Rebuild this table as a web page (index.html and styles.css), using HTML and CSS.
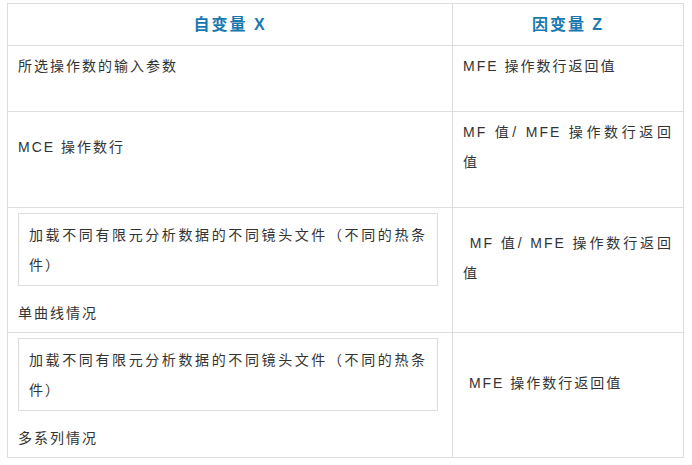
FILE: index.html
```html
<!DOCTYPE html>
<html lang="zh-CN">
<head>
<meta charset="utf-8">
<title>自变量与因变量</title>
<link rel="stylesheet" href="styles.css">
</head>
<body>
<table class="vars">
  <colgroup>
    <col class="col-x">
    <col class="col-z">
  </colgroup>
  <thead>
    <tr>
      <th>自变量 X</th>
      <th>因变量 Z</th>
    </tr>
  </thead>
  <tbody>
    <tr>
      <td><p class="para">所选操作数的输入参数</p></td>
      <td><p class="para">MFE 操作数行返回值</p></td>
    </tr>
    <tr>
      <td><p class="para">MCE 操作数行</p></td>
      <td><p class="para">MF 值/ MFE 操作数行返回值</p></td>
    </tr>
    <tr>
      <td>
        <div class="box">加载不同有限元分析数据的不同镜头文件（不同的热条件）</div>
        <p class="plain">单曲线情况</p>
      </td>
      <td><p class="para">&nbsp;MF 值/ MFE 操作数行返回值</p></td>
    </tr>
    <tr>
      <td>
        <div class="box">加载不同有限元分析数据的不同镜头文件（不同的热条件）</div>
        <p class="plain">多系列情况</p>
      </td>
      <td><p class="para">&nbsp;MFE 操作数行返回值</p></td>
    </tr>
  </tbody>
</table>
</body>
</html>
```
FILE: styles.css
```css
html, body {
  margin: 0;
  padding: 0;
  background: #ffffff;
}

body {
  font-family: "Liberation Sans", "Noto Sans CJK SC", sans-serif;
  color: #333333;
}

.vars {
  border-collapse: collapse;
  table-layout: fixed;
  width: 677px;
  margin: 3px 0 0 7px;
}

.col-x { width: 445px; }
.col-z { width: 231px; }

.vars th,
.vars td {
  border: 1px solid #dddddd;
}

.vars th {
  padding: 10px 10px;
  font-size: 16px;
  line-height: 21px;
  font-weight: bold;
  letter-spacing: 2px;
  color: #1878b0;
  text-align: center;
}

.vars td {
  padding: 5px 10px 4px 10px;
  font-size: 14px;
  line-height: 30px;
  letter-spacing: 2px;
  vertical-align: middle;
  text-align: justify;
}

.para {
  margin: 0 0 26px 0;
}

.plain {
  margin: 0;
}

.box {
  border: 1px solid #dddddd;
  padding: 6px 10px 5px 10px;
  margin: 0 4px 12px 0;
  text-align: justify;
}
```
